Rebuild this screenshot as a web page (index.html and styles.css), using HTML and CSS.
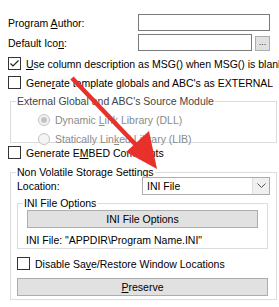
FILE: index.html
```html
<!DOCTYPE html>
<html lang="en">
<head>
  <meta charset="UTF-8">
  <title>Global Properties</title>
  <link rel="stylesheet" href="styles.css">
</head>
<body>
  <div class="form">
    <!-- Text fields -->
    <div class="field-row">
      <span class="label">Program <u>A</u>uthor:</span>
      <span class="input wide"></span>
    </div>
    <div class="field-row">
      <span class="label">Default Ico<u>n</u>:</span>
      <span class="input narrow"></span>
      <span class="dots">...</span>
    </div>

    <!-- Check boxes -->
    <div class="check-row first">
      <span class="box checked">
        <svg width="11" height="11" viewBox="0 0 11 11"><path d="M1.5 5.5 L4 8 L9.5 2.5" fill="none" stroke="#222" stroke-width="1.2"/></svg>
      </span>
      <span class="nowrap"><u>U</u>se column description as MSG() when MSG() is blank</span>
    </div>
    <div class="check-row">
      <span class="box"></span>
      <span class="nowrap">Gene<u>r</u>ate template globals and ABC's as EXTERNAL</span>
    </div>

    <fieldset class="group group-ext">
      <legend class="dim-dark">External Global and ABC's Source Module</legend>
      <div class="radio-row">
        <span class="radio on"></span>
        <span>Dynamic <u>L</u>ink Library (DLL)</span>
      </div>
      <div class="radio-row">
        <span class="radio"></span>
        <span>Statically Lin<u>k</u>ed Library (LIB)</span>
      </div>
    </fieldset>

    <div class="check-row embed">
      <span class="box"></span>
      <span>Generate E<u>M</u>BED Comments</span>
    </div>

    <fieldset class="group group-nv">
      <legend>Non Volatile Storage Settings</legend>
      <div class="location-row">
        <span>Location:</span>
        <span class="combo">
          <span class="combo-text">INI File</span>
          <span class="combo-btn">
            <svg width="9" height="6" viewBox="0 0 9 6"><path d="M0.5 0.5 L4.5 4.5 L8.5 0.5" fill="none" stroke="#555" stroke-width="1"/></svg>
          </span>
        </span>
      </div>
      <fieldset class="group group-ini">
        <legend>INI File Options</legend>
        <div class="btn ini-btn">INI File Options</div>
        <div class="ini-path">INI File: "APPDIR\Program Name.INI"</div>
      </fieldset>
      <div class="check-row disable">
        <span class="box"></span>
        <span>Disable Sa<u>v</u>e/Restore Window Locations</span>
      </div>
      <div class="btn preserve-btn"><u>P</u>reserve</div>
    </fieldset>
  </div>

  <!-- Red annotation arrow drawn over the dialog -->
  <svg class="arrow" width="279" height="307" viewBox="0 0 279 307">
    <line x1="72" y1="78" x2="137" y2="146" stroke="#e8312a" stroke-width="4.5"/>
    <polygon points="157,169 126,152 149,131" fill="#e8312a"/>
  </svg>
</body>
</html>
```

FILE: styles.css
```css
* {
  margin: 0;
  padding: 0;
  box-sizing: border-box;
}
body {
  background: #fff;
  font-family: 'Liberation Sans', Arial, sans-serif;
  font-size: 10.5px;
  color: #000;
  width: 279px;
  height: 307px;
  overflow: hidden;
  position: relative;
}
u {
  text-decoration: underline;
  text-underline-offset: 1px;
}
.form {
  padding: 14px 0 0 8px;
}
.nowrap {
  white-space: nowrap;
}
/* label + input rows */
.field-row {
  display: flex;
  align-items: center;
  height: 17px;
  margin-bottom: 3px;
}
.label {
  width: 130px;
}
.input {
  height: 17px;
  border: 1px solid #7a7a7a;
  background: #fff;
}
.input.wide {
  width: 132px;
}
.input.narrow {
  width: 114px;
}
.dots {
  width: 15px;
  height: 15px;
  margin-left: 3px;
  margin-top: 2px;
  background: #e1e1e1;
  border: 1px solid #adadad;
  font-size: 9px;
  line-height: 11px;
  text-align: center;
  color: #333;
}
/* check boxes */
.check-row {
  display: flex;
  align-items: center;
  height: 19px;
  overflow: hidden;
}
.check-row.first {
  margin-top: 1px;
}
.box {
  flex: none;
  width: 13px;
  height: 13px;
  border: 1px solid #333;
  background: #fff;
  margin-right: 5px;
  display: flex;
  align-items: center;
  justify-content: center;
}
/* group boxes */
.group {
  border: 1px solid #dcdcdc;
  min-width: 0;
}
.group legend {
  padding: 0 1px;
  margin-left: 5px;
  line-height: 12px;
}
.group-ext {
  margin: 3px 2px 0 2px;
  height: 48px;
  padding-top: 3px;
}
.dim-dark {
  color: #444;
}
.radio-row {
  display: flex;
  align-items: center;
  height: 19px;
  margin-left: 27px;
  color: #8a8a8a;
}
.radio {
  width: 12px;
  height: 12px;
  border: 1px solid #c4c4c4;
  border-radius: 50%;
  background: #f4f4f4;
  margin-right: 5px;
  display: flex;
  align-items: center;
  justify-content: center;
}
.radio.on::after {
  content: "";
  width: 6px;
  height: 6px;
  border-radius: 50%;
  background: #c4c4c4;
}
.check-row.embed {
  margin-top: 1px;
  height: 17px;
}
.group-nv {
  margin: 5px 2px 0 2px;
  padding-bottom: 3px;
}
.location-row {
  display: flex;
  align-items: center;
  justify-content: space-between;
  height: 18px;
  margin: -1px 6px 0 6px;
}
.combo {
  width: 128px;
  height: 18px;
  border: 1px solid #adadad;
  display: flex;
  align-items: center;
  background: #fff;
}
.combo-text {
  flex: 1;
  padding-left: 4px;
}
.combo-btn {
  width: 17px;
  height: 16px;
  background: #f0f0f0;
  border-left: 1px solid #dcdcdc;
  display: flex;
  align-items: center;
  justify-content: center;
}
.group-ini {
  margin: 2px 8px 0 6px;
  padding-bottom: 2px;
}
.btn {
  height: 18px;
  background: #e1e1e1;
  border: 1px solid #adadad;
  text-align: center;
  line-height: 16px;
}
.ini-btn {
  margin: 1px 9px 0 9px;
}
.ini-path {
  margin: 6px 0 0 8px;
  line-height: 12px;
}
.check-row.disable {
  margin: 5px 0 0 6px;
  height: 19px;
}
.preserve-btn {
  margin: 5px 8px 0 6px;
}
/* annotation */
.arrow {
  position: absolute;
  left: 0;
  top: 0;
  pointer-events: none;
}
```
